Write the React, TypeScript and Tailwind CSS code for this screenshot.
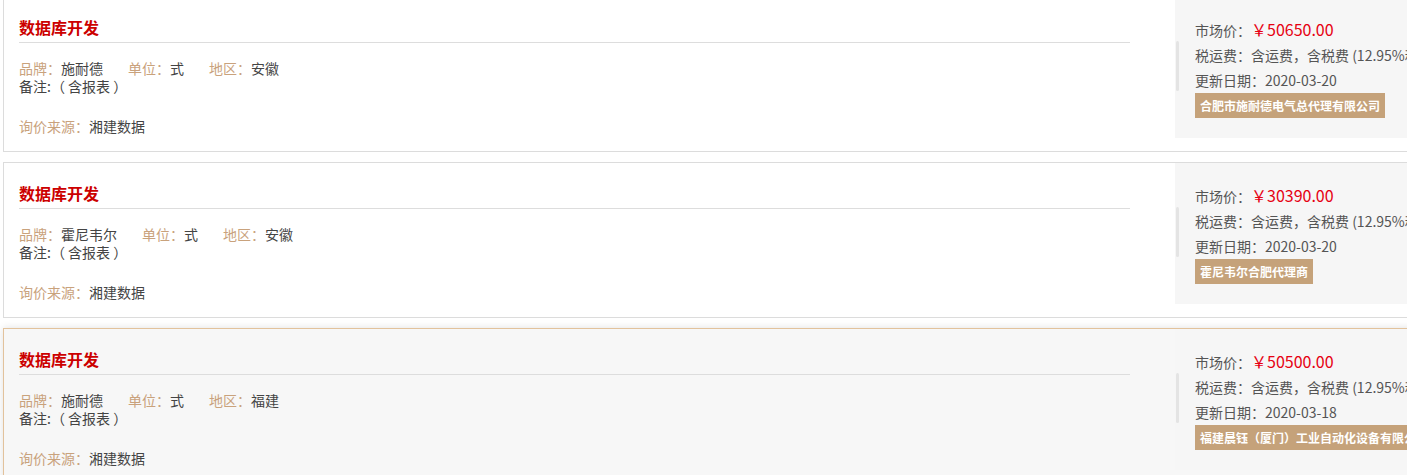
import React from 'react';

type Item = {
  brand: string;
  region: string;
  price: string;
  date: string;
  company: string;
  active?: boolean;
};

const items: Item[] = [
  { brand: '施耐德', region: '安徽', price: '50650.00', date: '2020-03-20', company: '合肥市施耐德电气总代理有限公司' },
  { brand: '霍尼韦尔', region: '安徽', price: '30390.00', date: '2020-03-20', company: '霍尼韦尔合肥代理商' },
  { brand: '施耐德', region: '福建', price: '50500.00', date: '2020-03-18', company: '福建晨钰（厦门）工业自动化设备有限公司', active: true },
];

function PriceCard({ item }: { item: Item }) {
  return (
    <div
      className={
        item.active
          ? 'flex w-max border border-[#e2c29c] bg-[#f7f7f7] shadow-[0_0_8px_rgba(0,0,0,0.12)]'
          : 'flex w-max border border-[#dcdcdc] bg-white'
      }
    >
      {/* left: title + attributes */}
      <div className="w-[1171px] shrink-0 pl-[15px] pr-[45px] pt-[15px] pb-[16px]">
        <div className="h-[31px] border-b border-[#dddddd] text-[16px] leading-[30px] font-bold text-[#cc0000]">
          数据库开发
        </div>
        <div className="mt-[16px] flex text-[14px] leading-[18px] text-[#444]">
          <span className="mr-[25px]">
            <span className="text-[#c9a27c]">品牌：</span>
            {item.brand}
          </span>
          <span className="mr-[25px]">
            <span className="text-[#c9a27c]">单位：</span>式
          </span>
          <span>
            <span className="text-[#c9a27c]">地区：</span>
            {item.region}
          </span>
        </div>
        <div className="text-[14px] leading-[18px] text-[#444]">备注:（ 含报表 ）</div>
        <div className="mt-[22px] text-[14px] leading-[18px] text-[#444]">
          <span className="text-[#c9a27c]">询价来源：</span>湘建数据
        </div>
      </div>

      {/* right: price panel */}
      <div className="relative h-[141px] w-[300px] shrink-0 bg-[#f6f6f6] pl-[20px] pt-[20px] text-[14px] leading-[25px] text-[#555]">
        <div className="absolute left-[1px] top-[44px] h-[50px] w-[3px] rounded-sm bg-[#e4e4e4]" />
        <div className="whitespace-nowrap">
          市场价：<span className="text-[16px] text-[#e60012]">￥{item.price}</span>
        </div>
        <div className="whitespace-nowrap">税运费：含运费，含税费 (12.95%税率)</div>
        <div className="whitespace-nowrap">更新日期：{item.date}</div>
        <div className="inline-block h-[25px] whitespace-nowrap bg-[#c5a27a] px-[5px] text-[12px] leading-[25px] font-bold text-white">
          {item.company}
        </div>
      </div>
    </div>
  );
}

export default function App() {
  return (
    <div
      className="h-[475px] w-[1407px] overflow-hidden bg-white"
      style={{ fontFamily: '"Microsoft YaHei", "Noto Sans CJK SC", "Noto Sans", sans-serif' }}
    >
      <div className="-mt-[4px] ml-[3px] flex flex-col gap-[10px]">
        {items.map((item, i) => (
          <PriceCard key={i} item={item} />
        ))}
      </div>
    </div>
  );
}
